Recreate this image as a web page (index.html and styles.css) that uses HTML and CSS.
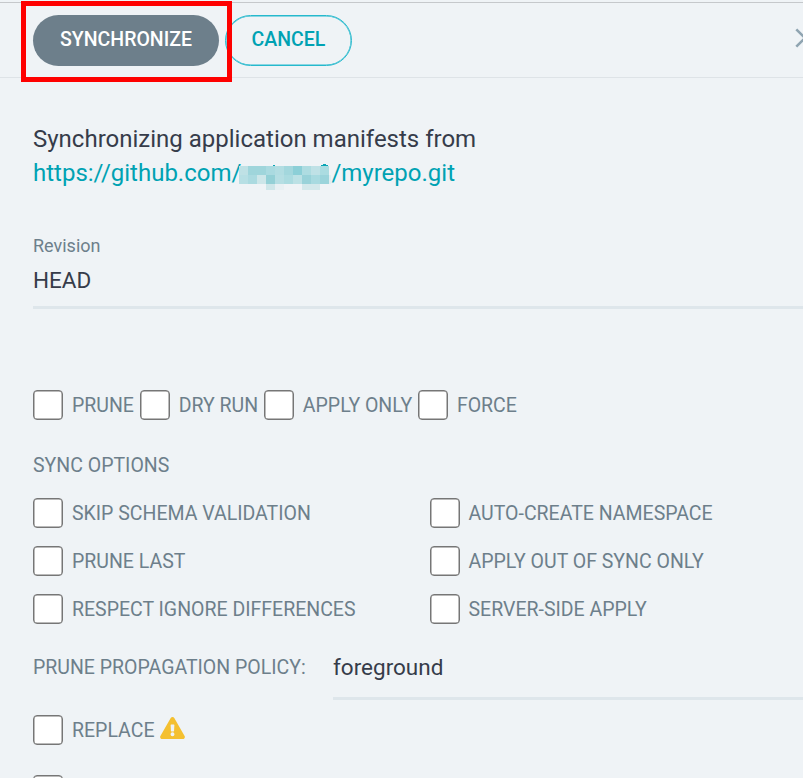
FILE: index.html
```html
<!DOCTYPE html>
<html lang="en">
<head>
<meta charset="utf-8">
<title>Synchronize application</title>
<link rel="stylesheet" href="styles.css">
</head>
<body>
<div class="panel">
  <header class="bar">
    <button class="btn btn-primary">SYNCHRONIZE</button>
    <button class="btn btn-outline">CANCEL</button>
    <svg class="close" width="20" height="20" viewBox="0 0 20 20"><path d="M1.3 1.3 18.7 18.7M18.7 1.3 1.3 18.7"/></svg>
    <div class="highlight"></div>
  </header>
  <main class="content">
    <h1 class="title">Synchronizing application manifests from<br><a class="repo">https://github.com/<svg class="mask" width="93" height="27" viewBox="0 0 93 27" shape-rendering="crispEdges">
      <path fill="#bfe1e5" d="M0 3h9v9H0z"/><path fill="#9fd5db" d="M9 3h18v9H9z"/><path fill="#aadae0" d="M27 3h9v9h-9z"/><path fill="#b2dde2" d="M36 3h9v9h-9z"/><path fill="#a3d7dd" d="M45 3h9v9h-9z"/><path fill="#8ccfd7" d="M54 3h9v9h-9z"/><path fill="#aedce1" d="M63 3h9v9h-9z"/><path fill="#bfe1e6" d="M72 3h9v9h-9z"/><path fill="#abdce1" d="M81 3h9v9h-9z"/>
      <path fill="#b7dfe4" d="M0 12h9v9H0z"/><path fill="#abdae0" d="M9 12h9v9H9z"/><path fill="#cde6e9" d="M18 12h9v9h-9z"/><path fill="#94d0d6" d="M27 12h9v9h-9z"/><path fill="#b5dee3" d="M36 12h9v9h-9z"/><path fill="#abdbe0" d="M45 12h9v9h-9z"/><path fill="#bce1e5" d="M54 12h9v9h-9z"/><path fill="#99d2d9" d="M63 12h9v9h-9z"/><path fill="#a8dae0" d="M72 12h9v9h-9z"/><path fill="#9bd4db" d="M81 12h9v9h-9z"/>
      <path fill="#cee6e9" d="M27 21h9v6h-9z"/><path fill="#e8f0f3" d="M36 21h9v6h-9z"/><path fill="#d3e8eb" d="M63 21h18v6H63z"/><path fill="#e0eef1" d="M90 12h2v9h-2z"/>
      <path fill="#0ba5b5" d="M34 2h2v1h-2zM82 2h7v1h-7zM84 1h3v1h-3z"/>
    </svg>/myrepo.git</a></h1>

    <div class="field">
      <label class="field-label">Revision</label>
      <div class="field-value">HEAD</div>
    </div>

    <div class="flags">
      <label class="check"><span class="box"></span>PRUNE</label>
      <label class="check"><span class="box"></span>DRY RUN</label>
      <label class="check"><span class="box"></span>APPLY ONLY</label>
      <label class="check"><span class="box"></span>FORCE</label>
    </div>

    <div class="section">SYNC OPTIONS</div>
    <div class="options">
      <label class="check"><span class="box"></span>SKIP SCHEMA VALIDATION</label>
      <label class="check"><span class="box"></span>AUTO-CREATE NAMESPACE</label>
      <label class="check"><span class="box"></span>PRUNE LAST</label>
      <label class="check"><span class="box"></span>APPLY OUT OF SYNC ONLY</label>
      <label class="check"><span class="box"></span>RESPECT IGNORE DIFFERENCES</label>
      <label class="check"><span class="box"></span>SERVER-SIDE APPLY</label>
    </div>

    <div class="policy">
      <span class="policy-label">PRUNE PROPAGATION POLICY:</span>
      <div class="select">foreground</div>
    </div>

    <label class="check replace"><span class="box"></span>REPLACE
      <svg class="warn" width="25" height="22" viewBox="0 0 576 512"><path d="M569.5 440c18.500 32-4.700 72-41.600 72H48c-36.900 0-60-40-41.600-72L246.400 24c18.500-32 64.700-32 83.200 0l239.900 416zM288 354a46 46 0 1 0 0 92 46 46 0 0 0 0-92zm-43.700-165.300 7.400 136c.3 6.400 5.600 11.300 12 11.300h48.500c6.400 0 11.600-5 12-11.300l7.400-136c.4-6.900-5.100-12.700-12-12.700h-63.400c-6.900 0-12.300 5.800-11.900 12.700z"/></svg>
    </label>
    <label class="check"><span class="box"></span></label>
  </main>
</div>
</body>
</html>
```
FILE: styles.css
```css
* { box-sizing: border-box; }
body {
  margin: 0;
  height: 778px;
  overflow: hidden;
  background: #eff3f6;
  color: #363c4a;
  font-family: Roboto, "Liberation Sans", sans-serif;
}
.panel { margin-top: 2px; border-top: 1px solid #c5c8cb; width: 803px; }
.bar {
  position: relative;
  display: flex;
  height: 75px;
  padding: 12px 0 0 33px;
  border-bottom: 1px solid #dee3e7;
}
.btn {
  flex: none;
  height: 51px;
  padding: 0 0 2px;
  border: 0;
  border-radius: 26px;
  font: 500 19.5px Roboto, sans-serif;
}
.btn-primary { width: 186px; background: #6d7f8b; color: #fff; }
.btn-outline {
  width: 127px;
  margin-left: 6px;
  background: transparent;
  border: 1px solid #26b9cd;
  box-shadow: inset 0 0 0 0.5px #26b9cd;
  color: #00a2b3;
}
.close {
  flex: none;
  margin: 13px 0 0 443px;
  stroke: #8fa4b1;
  stroke-width: 2.6;
  fill: none;
}
.highlight {
  position: absolute;
  left: 21px;
  top: -2px;
  width: 211px;
  height: 81px;
  border: 5px solid #fe0000;
}
.content { padding: 44px 0 0 33px; }
.title { margin: 0; font-size: 24px; font-weight: 400; line-height: 34px; }
.repo { color: #00a2b3; }
.mask { height: 27px; margin: 0 -1px -9px -2px; vertical-align: baseline; }
.field { margin-top: 44px; border-bottom: 3px solid #dee6eb; height: 75px; }
.field-label { display: block; font-size: 18px; line-height: 24px; color: #6d7f8b; }
.field-value { margin-top: 7px; font-size: 22.5px; line-height: 30px; }
.check {
  display: flex;
  align-items: center;
  height: 30px;
  font-size: 19.5px;
  color: #6d7f8b;
  white-space: nowrap;
}
.box {
  flex: none;
  width: 30px;
  height: 30px;
  margin-right: 9px;
  border: 1px solid #767676;
  border-radius: 4px;
  box-shadow: inset 0 0 0 0.5px #767676;
  background: #fff;
}
.flags { display: flex; gap: 5.7px; margin-top: 81px; }
.section { margin-top: 34px; font-size: 19.5px; line-height: 24px; color: #6d7f8b; }
.options {
  display: grid;
  grid-template-columns: 396.5px 1fr;
  row-gap: 18px;
  margin-top: 20px;
}
.policy { display: flex; height: 76px; align-items: flex-start; }
.policy-label {
  width: 300px;
  margin-top: 32px;
  font-size: 19.5px;
  line-height: 24px;
  color: #6d7f8b;
}
.select {
  flex: 1;
  height: 49px;
  margin-top: 27px;
  border-bottom: 3px solid #dee6eb;
  font-size: 22.5px;
  line-height: 32px;
}
.replace { margin: 15px 0 30px; }
.warn { margin: -5px 0 0 5.5px; fill: #f4c030; }
```
